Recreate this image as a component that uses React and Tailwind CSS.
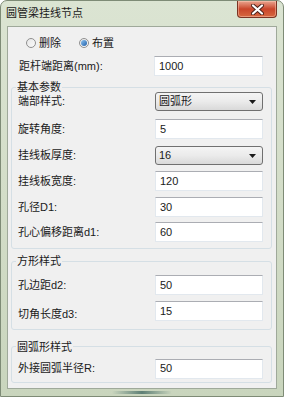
import React from 'react';

const font = "font-['Liberation_Sans','Noto_Sans_CJK_SC',sans-serif]";

function TextBox({ value, wide }) {
  return (
    <div
      className={`${wide ? 'w-[109px]' : 'w-[108px]'} h-[20px] bg-white border border-[#e2e8ee] border-t-[#abadb3] flex items-center pl-[4px] text-[11px] text-[#1a1a1a]`}
    >
      {value}
    </div>
  );
}

function Combo({ value }) {
  return (
    <div className="w-[108px] h-[19px] rounded-[3px] border border-[#707070] bg-gradient-to-b from-[#f4f4f4] via-[#ebebeb] to-[#d9d9d9] flex items-center justify-between pl-[3px] pr-[6px] text-[11px] text-[#1a1a1a]">
      <span>{value}</span>
      <svg width="7" height="4" viewBox="0 0 7 4">
        <path d="M0 0 L7 0 L3.5 4 Z" fill="#1a1a1a" />
      </svg>
    </div>
  );
}

function Radio({ checked, label }) {
  return (
    <div className="flex items-center gap-[3px]">
      <div className="w-[10px] h-[10px] rounded-full border border-[#8f8f8f] bg-gradient-to-br from-[#e6e6e6] to-[#fbfbfb] flex items-center justify-center">
        {checked && <div className="w-[6px] h-[6px] rounded-full bg-gradient-to-br from-[#8cc4f2] to-[#1f5fa8]" />}
      </div>
      <span>{label}</span>
    </div>
  );
}

function Row({ label, children, className = '', labelClass = '' }) {
  return (
    <div className={`flex items-center pl-[6px] ${className}`}>
      <span className={`w-[137px] ${labelClass}`}>{label}</span>
      {children}
    </div>
  );
}

function Group({ title, children, className = '' }) {
  return (
    <fieldset className={`ml-[3px] w-[261px] border border-[#d5dfe5] rounded-[3px] ${className}`}>
      <legend className="ml-[4px] px-[1px] leading-[10px] text-[11px]">{title}</legend>
      {children}
    </fieldset>
  );
}

export default function App() {
  return (
    <div className={`${font} relative w-[284px] h-[397px] border border-[#7e8b76] rounded-t-[7px] bg-gradient-to-b from-[#dbe4d2] via-[#d3ddc8] to-[#c9d5bd] flex flex-col text-[11px] text-[#1a1a1a]`}>
      {/* 标题栏 */}
      <div className="h-[25px] flex items-center pl-[5px] pb-[1px] text-[11px] text-[#1a1a1a]">圆管梁挂线节点</div>

      <div className="absolute top-0 right-[6px] w-[40px] h-[17px] rounded-b-[4px] border border-t-0 border-[#7b3323] bg-gradient-to-b from-[#e9a48f] via-[#c9452a] to-[#d6673f] flex items-center justify-center shadow-[inset_0_0_0_1px_rgba(255,210,190,0.45)]">
        <svg width="13" height="11" viewBox="0 0 13 11">
          <path d="M2 1.5 L11 9.5 M11 1.5 L2 9.5" stroke="#4a2018" strokeWidth="4" strokeLinecap="round" />
          <path d="M2 1.5 L11 9.5 M11 1.5 L2 9.5" stroke="#ffffff" strokeWidth="2.2" strokeLinecap="round" />
        </svg>
      </div>

      {/* 客户区 */}
      <div className="mx-[6px] h-[363px] border border-[#9fa99a] bg-[#f0f0f0] flex flex-col">
        <div className="mt-[8px] h-[16px] flex items-center gap-[18px] pl-[18px]">
          <Radio label="删除" />
          <Radio checked label="布置" />
        </div>

        <div className="mt-[5px] flex items-center pl-[11px]">
          <span className="w-[135px]">距杆端距离(mm):</span>
          <TextBox value="1000" wide />
        </div>

        <Group title="基本参数" className="mt-[6px] pb-[6px]">
          <Row label="端部样式:" className="mt-0">
            <Combo value="圆弧形" />
          </Row>
          <Row label="旋转角度:" className="mt-[8px]">
            <TextBox value="5" />
          </Row>
          <Row label="挂线板厚度:" className="mt-[7px]">
            <Combo value="16" />
          </Row>
          <Row label="挂线板宽度:" className="mt-[6px]">
            <TextBox value="120" />
          </Row>
          <Row label="孔径D1:" className="mt-[6px]">
            <TextBox value="30" />
          </Row>
          <Row label="孔心偏移距离d1:" className="mt-[5px]">
            <TextBox value="60" />
          </Row>
        </Group>

        <Group title="方形样式" className="mt-[7px] pb-[6px]">
          <Row label="孔边距d2:" className="mt-[9px]">
            <TextBox value="50" />
          </Row>
          <Row label="切角长度d3:" className="mt-[5px]" labelClass="pt-[6px]">
            <TextBox value="15" />
          </Row>
        </Group>

        <Group title="圆弧形样式" className="mt-[12px] pb-[3px]">
          <Row label="外接圆弧半径R:" className="mt-[7px]">
            <TextBox value="50" />
          </Row>
        </Group>
      </div>

      <div className="mx-auto mt-[2px] w-[60px] h-[3px] rounded-full bg-gradient-to-r from-transparent via-[#2f5a55] to-transparent opacity-70" />
    </div>
  );
}
